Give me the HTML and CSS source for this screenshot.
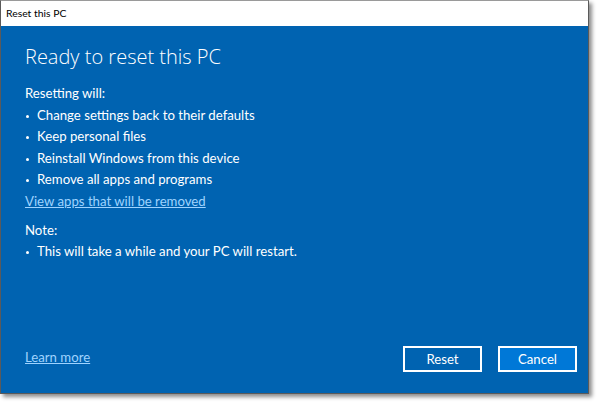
FILE: index.html
```html
<!DOCTYPE html>
<html>
<head>
<meta charset="utf-8">
<link rel="stylesheet" href="styles.css">
</head>
<body>
<div class="window">
  <div class="titlebar">Reset this PC</div>
  <div class="content">
    <h1 class="heading">Ready to reset this PC</h1>
    <p class="label">Resetting will:</p>
    <ul class="list">
      <li>Change settings back to their defaults</li>
      <li>Keep personal files</li>
      <li>Reinstall Windows from this device</li>
      <li>Remove all apps and programs</li>
    </ul>
    <a class="link" href="#">View apps that will be removed</a>
    <p class="label note">Note:</p>
    <ul class="list">
      <li>This will take a while and your PC will restart.</li>
    </ul>
    <div class="footer">
      <a class="link more" href="#">Learn more</a>
      <div class="buttons">
        <button class="btn">Reset</button>
        <button class="btn primary">Cancel</button>
      </div>
    </div>
  </div>
</div>
</body>
</html>
```
FILE: styles.css
```css
html, body {
  margin: 0;
  padding: 0;
  background: #ffffff;
}
body {
  width: 600px;
  height: 404px;
  font-family: "Lato", "Open Sans", sans-serif;
}
.window {
  width: 589px;
  height: 394px;
  border: 1px solid #5a5a5a;
  border-top-color: #9a9a9a;
  box-shadow: 3px 3px 4px rgba(0,0,0,0.45);
  display: flex;
  flex-direction: column;
  box-sizing: border-box;
}
.titlebar {
  height: 25px;
  flex: none;
  background: #ffffff;
  color: #000;
  font-size: 10.4px;
  line-height: 25px;
  padding-left: 5px;
}
.content {
  flex: 1;
  background: #0063b1;
  color: #ffffff;
  padding: 17px 11px 21px 24px;
  display: flex;
  flex-direction: column;
}
.heading {
  margin: 0 0 12px 0;
  font-family: "Open Sans", sans-serif;
  font-weight: 300;
  font-size: 20px;
  line-height: 28px;
}
.label {
  margin: 0;
  font-size: 13.2px;
  line-height: 21.6px;
}
.note {
  margin-top: 7px;
}
.list {
  margin: 0;
  padding: 0;
  list-style: none;
}
.list li {
  font-size: 13.2px;
  line-height: 21.6px;
  position: relative;
  padding-left: 12px;
}
.list li::before {
  content: "";
  position: absolute;
  left: 1px;
  top: 10px;
  width: 3px;
  height: 3px;
  border-radius: 50%;
  background: #fff;
}
.link {
  color: #9fd3ff;
  font-size: 13.2px;
  line-height: 21.6px;
  text-decoration: underline;
  align-self: flex-start;
}
.more {
  margin-top: 1px;
}
.footer {
  margin-top: auto;
  display: flex;
  justify-content: space-between;
  align-items: center;
}
.buttons {
  display: flex;
  gap: 16px;
}
.btn {
  width: 79px;
  height: 26px;
  box-sizing: border-box;
  border: 2px solid #ffffff;
  background: #0063b1;
  color: #fff;
  font-family: "Lato", "Open Sans", sans-serif;
  font-size: 13.2px;
  padding: 0;
}
.btn.primary {
  background: #0078d7;
}
```
